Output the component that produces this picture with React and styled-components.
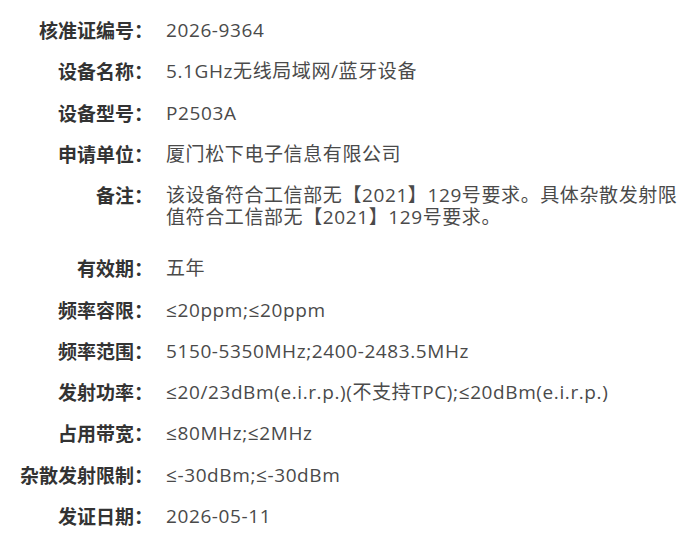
import React from "react";
import styled, { createGlobalStyle } from "styled-components";

const Global = createGlobalStyle`
  html, body { margin: 0; padding: 0; background: #ffffff; }
  body { width: 700px; height: 533px; overflow: hidden; }
`;

const Page = styled.div`
  width: 700px;
  height: 533px;
  box-sizing: border-box;
  background: #ffffff;
  padding: 19px 0 0 0;
  font-family: "Noto Sans CJK SC", "Noto Sans", sans-serif;
`;

const List = styled.div`
  display: flex;
  flex-direction: column;
  gap: 19.25px;
`;

const Row = styled.div`
  display: grid;
  grid-template-columns: 153px 520px;
  column-gap: 13px;
  align-items: start;
  margin-bottom: ${(p) => (p.$extra ? "10px" : "0")};
`;

const Label = styled.div`
  text-align: right;
  font-size: 19px;
  line-height: 22px;
  font-weight: 700;
  color: #333333;
  white-space: nowrap;
`;

const Value = styled.div`
  font-size: 19px;
  line-height: 22px;
  color: #4a4a4a;
  font-family: "Open Sans", "Noto Sans CJK SC", sans-serif;
  letter-spacing: 0.6px;
`;

const rows = [
  ["核准证编号：", "2026-9364"],
  ["设备名称：", "5.1GHz无线局域网/蓝牙设备"],
  ["设备型号：", "P2503A"],
  ["申请单位：", "厦门松下电子信息有限公司"],
  ["备注：", "该设备符合工信部无【2021】129号要求。具体杂散发射限值符合工信部无【2021】129号要求。", true],
  ["有效期：", "五年"],
  ["频率容限：", "≤20ppm;≤20ppm"],
  ["频率范围：", "5150-5350MHz;2400-2483.5MHz"],
  ["发射功率：", "≤20/23dBm(e.i.r.p.)(不支持TPC);≤20dBm(e.i.r.p.)"],
  ["占用带宽：", "≤80MHz;≤2MHz"],
  ["杂散发射限制：", "≤-30dBm;≤-30dBm"],
  ["发证日期：", "2026-05-11"],
];

export default function App() {
  return (
    <>
      <Global />
      <Page>
        <List>
          {rows.map(([label, value, extra]) => (
            <Row key={label} $extra={extra}>
              <Label>{label}</Label>
              <Value>{value}</Value>
            </Row>
          ))}
        </List>
      </Page>
    </>
  );
}
